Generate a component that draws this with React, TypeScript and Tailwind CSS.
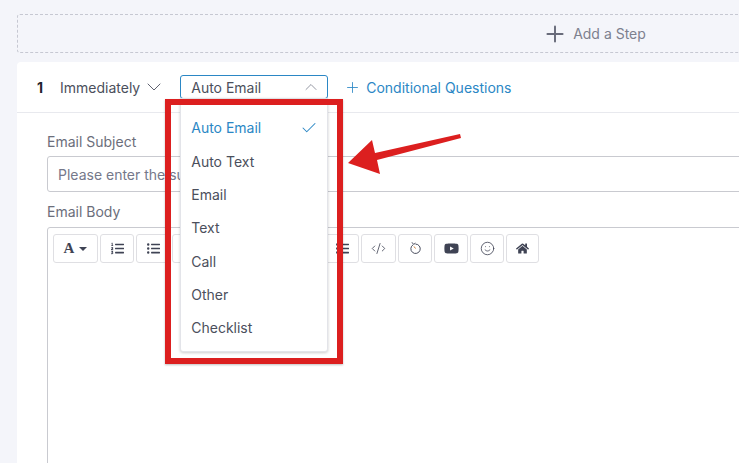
import { type ReactNode } from "react";
import { Check, ChevronDown, ChevronUp, CodeXml, Plus, Smile } from "lucide-react";
import { FaHome, FaListOl, FaListUl, FaYoutube } from "react-icons/fa";

const options = ["Auto Email", "Auto Text", "Email", "Text", "Call", "Other", "Checklist"];

const ToolButton = ({ children, className = "w-[34px]" }: { children?: ReactNode; className?: string }) => (
  <div className={`flex h-[29px] shrink-0 items-center justify-center rounded-[3px] border border-[#dfdfe3] bg-white text-[#3f4354] ${className}`}>
    {children}
  </div>
);

export default function App() {
  return (
    <div className="relative h-[463px] w-[739px] overflow-hidden bg-[#f4f5fa] pl-[17px] pt-[14px] font-['Inter',sans-serif] text-[14px] text-[#4b4f5c]">
      <div className="w-[1154px]">
        <div className="flex h-[39px] items-center justify-center gap-[5px] rounded-[3px] border border-dashed border-[#c6c8d2] text-[#7d808e]">
          <Plus className="h-[26px] w-[26px] text-[#686b7a]" strokeWidth={1.8} />
          <span>Add a Step</span>
        </div>

        <div className="mt-[9px] rounded-t-[4px] bg-white">
          <div className="flex h-[51px] items-center border-b border-[#e8e9ee] pl-[20px]">
            <span className="w-[23px] font-bold text-[#23252e]">1</span>
            <span>Immediately</span>
            <ChevronDown className="ml-[2px] h-[24px] w-[24px] text-[#5f6270]" strokeWidth={1} />
            <div className="relative ml-[14px] flex h-[24px] w-[148px] items-center justify-between rounded-[3px] border border-[#2b87c5] pl-[10px] pr-[6px]">
              <span>Auto Email</span>
              <ChevronUp className="h-[20px] w-[20px] text-[#8b8e9a]" strokeWidth={1.1} />
              <ul className="absolute left-[-1px] top-[22px] z-10 h-[254px] w-[148px] rounded-b-[3px] border border-[#e3e4e9] bg-white pt-[12px] shadow-[0_1px_3px_rgba(0,0,0,0.2)]">
                {options.map((option, i) => (
                  <li
                    key={option}
                    className={`flex h-[33.35px] items-center justify-between pl-[10px] pr-[9px] ${i === 0 ? "text-[#2b87c5]" : ""}`}
                  >
                    {option}
                    {i === 0 && <Check className="h-[18px] w-[18px]" strokeWidth={1.4} />}
                  </li>
                ))}
              </ul>
            </div>
            <Plus className="ml-[16px] h-[17px] w-[17px] text-[#2b87c5]" strokeWidth={1.2} />
            <span className="ml-[5px] text-[#2b87c5]">Conditional Questions</span>
          </div>

          <div className="pl-[30px] pt-[20px]">
            <div className="h-[17px] leading-[17px] text-[#6b6e7b]">Email Subject</div>
            <div className="mt-[6px] flex h-[36px] items-center rounded-[3px] border border-[#c9cad0] pl-[10px] text-[#75788a]">
              Please enter the subject
            </div>
            <div className="mt-[11px] h-[17px] leading-[17px] text-[#6b6e7b]">Email Body</div>
            <div className="mt-[7px] h-[300px] rounded-[3px] border border-[#c9cad0] pl-[5px] pt-[6px]">
              <div className="flex gap-[2px]">
                <ToolButton className="w-[45px] gap-[5px]">
                  <span className="font-['Liberation_Serif',serif] text-[15px] font-bold">A</span>
                  <span className="h-0 w-0 border-x-[4px] border-t-[4px] border-x-transparent border-t-[#3f4354]" />
                </ToolButton>
                <ToolButton><FaListOl className="h-[13px] w-[13px]" /></ToolButton>
                <ToolButton><FaListUl className="h-[13px] w-[13px]" /></ToolButton>
                <ToolButton className="w-[43px]" />
                <ToolButton />
                <ToolButton />
                <ToolButton />
                <ToolButton><FaListUl className="h-[13px] w-[13px]" /></ToolButton>
                <ToolButton className="w-[35px]"><CodeXml className="h-[15px] w-[15px]" strokeWidth={1.3} /></ToolButton>
                <ToolButton>
                  <svg viewBox="0 0 16 16" className="h-[15px] w-[15px]" fill="none" stroke="currentColor" strokeWidth="1">
                    <path d="M5.5 4a5 5 0 1 0 2.5-.7" />
                    <path d="M4.2 1.4 6 3.6 8 2.2" />
                    <path d="M8 8 6.4 5.8" stroke="#c9772e" />
                  </svg>
                </ToolButton>
                <ToolButton><FaYoutube className="h-[15px] w-[15px]" /></ToolButton>
                <ToolButton><Smile className="h-[15px] w-[15px]" strokeWidth={1.3} /></ToolButton>
                <ToolButton className="w-[33px]"><FaHome className="h-[13px] w-[13px]" /></ToolButton>
              </div>
            </div>
          </div>
        </div>
      </div>

      <div className="absolute left-[165px] top-[99px] z-20 h-[265px] w-[178px] border-[6px] border-[#dc1f1f] shadow-[0_1px_2px_rgba(0,0,0,0.25)]" />
      <svg className="absolute left-[340px] top-[125px] z-20 h-[60px] w-[130px]" viewBox="0 0 130 60">
        <path d="M8 38 32 15 35 28 120 9 121 13 37 35 40 49Z" fill="#dc1f1f" />
      </svg>
    </div>
  );
}
